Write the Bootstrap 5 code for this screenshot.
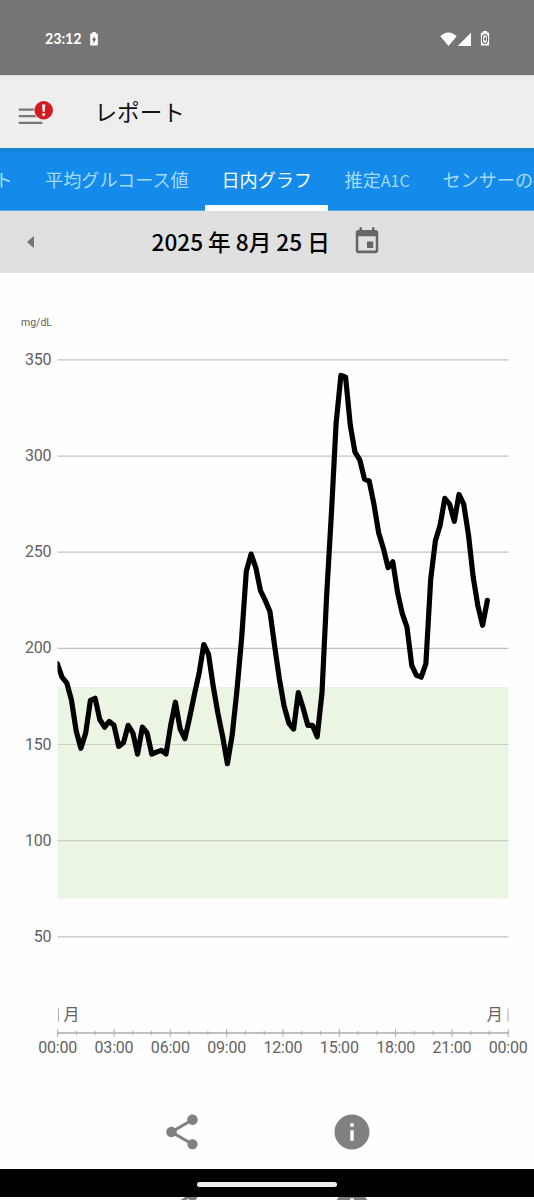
<!DOCTYPE html>
<html lang="ja">
<head>
<meta charset="utf-8">
<meta name="viewport" content="width=device-width, initial-scale=1">
<title>レポート</title>
<link rel="stylesheet" href="https://cdn.jsdelivr.net/npm/bootstrap@5.3.0/dist/css/bootstrap.min.css">
<style>
body{font-family:Roboto,"Noto Sans CJK JP",sans-serif;background:#fefefe;color:#111}
svg{display:block;flex:none}
.screen{height:1200px}
.status-bar{height:75px;background:#757575;color:#fff;padding:2px 44px 0 45px}
.clock{font:700 14.2px/20px Lato,sans-serif;width:37px}
.app-head{height:73px;background:#eee;border-top:1px solid #ddd;padding-left:18px}
.app-title{font:400 22.6px/32px "Noto Sans CJK JP",sans-serif;margin-left:39.5px}
.tab-strip{height:62.5px;background:linear-gradient(#1a7ecb,#148bea 5px);font:400 18.1px/27px "Noto Sans CJK JP",sans-serif;box-shadow:inset 0 -1px #58aaf0}
.tab-strip .nav-link{color:#a5daff;padding:18px 16.3px 11.5px;border-bottom:6px solid transparent;border-radius:0;white-space:nowrap;flex:none}
.tab-strip .nav-link.active{color:#fff;border-color:#fff;padding-left:16.6px}
.tab-strip .cut{width:28.8px;padding-left:0;direction:rtl}
.tab-strip .latin{font-size:16.2px}
.date-bar{height:62.5px;background:#e0e0e0;padding-left:26px}
.date-text{font:500 22.6px/32px "Noto Sans CJK JP",sans-serif;color:#000;margin-left:116.5px;width:200.5px;white-space:nowrap}
.actions{height:73px;padding-left:161px;padding-bottom:2px}
.home-bar{height:27.5px;background:#000}
.home-pill{width:140px;height:5px;background:#eee}
.below{height:3.5px;padding-left:161px}
.chart text{font-family:Roboto,"Noto Sans CJK JP",sans-serif;font-size:16px;letter-spacing:-.2px;fill:#626262}
</style>
</head>
<body>
<svg width="0" height="0" class="position-absolute" aria-hidden="true">
<symbol id="share" viewBox="0 0 24 24"><path fill="#808080" d="M18 16.08c-.76 0-1.44.3-1.96.77L8.91 12.7c.05-.23.09-.46.09-.7s-.04-.47-.09-.7l7.05-4.11c.54.5 1.25.81 2.04.81 1.66 0 3-1.34 3-3s-1.34-3-3-3-3 1.34-3 3c0 .24.04.47.09.7L8.04 9.81C7.5 9.31 6.79 9 6 9c-1.66 0-3 1.34-3 3s1.34 3 3 3c.79 0 1.5-.31 2.04-.81l7.12 4.16c-.05.21-.08.43-.08.65 0 1.61 1.31 2.92 2.92 2.92s2.92-1.31 2.92-2.92-1.31-2.92-2.92-2.92z"/></symbol>
<symbol id="info" viewBox="0 0 24 24"><path fill="#808080" d="M12 2C6.48 2 2 6.48 2 12s4.48 10 10 10 10-4.48 10-10S17.52 2 12 2zm1 15h-2v-6h2v6zm0-8h-2V7h2v2z"/></symbol>
</svg>
<div class="screen d-flex flex-column overflow-hidden">
<header class="status-bar d-flex align-items-center">
 <span class="clock">23:12</span>
 <svg class="ms-2" width="8" height="14" viewBox="0 0 8 14"><path fill="#fff" d="M2.4 0h3.2v1.5H7q.8 0 .8.8v10.4q0 .9-.8.9H1q-.8 0-.8-.9V2.3q0-.8.8-.8h1.4z"/><path fill="#666" d="M4.6 3.8v3h1.6L3.5 11.5V8.3H1.9z"/></svg>
 <div class="d-flex align-items-center ms-auto">
 <svg width="17" height="14" viewBox="0 0 17 14"><path fill="#fff" d="M8.5 14 .3 4.2Q4 .4 8.5.4t8.2 3.8z"/></svg>
 <svg width="15" height="14" viewBox="0 0 15 14"><path fill="#fff" d="M14 .7V14H.7z"/></svg>
 <svg class="ms-2" width="10" height="15" viewBox="0 0 10 15"><path fill="#fff" d="M3 0h4v1.4h1.2q.9 0 .9.9v11.4q0 .9-.9.9H1.8q-.9 0-.9-.9V2.3q0-.9.9-.9H3z"/><ellipse cx="5" cy="8" rx="2.6" ry="4.5" fill="none" stroke="#606060" stroke-width="1.1"/><path fill="#606060" d="m5.6 5-2.2 3.6h1.3V11l2-3.5H5.6z"/></svg>
 </div>
</header>
<div class="app-head d-flex align-items-center">
 <svg width="37" height="30" viewBox="0 0 37 30"><path stroke="#777" stroke-width="2.2" d="M.8 12.6h24M.8 19.2h24M.8 25.8h23.6"/><circle cx="25.7" cy="13.3" r="10" fill="#eee"/><circle cx="25.7" cy="13.3" r="9.2" fill="#d71920"/><path fill="#fff" d="M24.1 7.5h3.2l-.6 7.3h-2z"/><circle cx="25.7" cy="17.6" r="1.5" fill="#fff"/></svg>
 <h1 class="app-title mb-0">レポート</h1>
</div>
<nav class="tab-strip nav flex-nowrap overflow-hidden">
 <a class="nav-link cut">ト</a><a class="nav-link">平均グルコース値</a><a class="nav-link active">日内グラフ</a><a class="nav-link">推定<span class="latin">A1C</span></a><a class="nav-link">センサーの</a>
</nav>
<div class="date-bar d-flex align-items-center">
 <svg width="9" height="14" viewBox="0 0 9 14"><path fill="#777" d="M8 .7v12.6L1 7z"/></svg>
 <div class="date-text">2025 年 8月 25 日</div>
 <svg width="30" height="31" viewBox="0 0 24 24" preserveAspectRatio="none"><path fill="#666" d="M17 12h-5v5h5v-5zM16 1v2H8V1H6v2H5c-1.11 0-1.99.9-1.99 2L3 19c0 1.1.89 2 2 2h14c1.1 0 2-.9 2-2V5c0-1.1-.9-2-2-2h-1V1h-2zm3 18H5V8h14v11z"/></svg>
</div>
<main>
 <svg class="chart" id="chart" width="534" height="823" viewBox="0 273 534 823">
 <defs><clipPath id="plot"><rect x="57.5" y="340" width="451" height="600"/></clipPath></defs>
 </svg>
</main>
<div class="actions d-flex align-items-center">
 <svg width="42" height="42"><use href="#share"/></svg>
 <svg style="margin-left:128px" width="42" height="42"><use href="#info"/></svg>
</div>
<div class="home-bar d-flex justify-content-center align-items-center"><div class="home-pill rounded-pill mt-1"></div></div>
<div class="below d-flex">
 <svg width="42" height="4" viewBox="0 0 42 4"><path stroke="#808080" stroke-width="3" d="m19 5 10-6"/><circle cx="31.5" cy="-1.5" r="5.2" fill="#808080"/></svg>
 <svg style="margin-left:128px" width="42" height="4" viewBox="0 0 42 4"><circle cx="21" cy="16" r="17.5" fill="#808080" transform="translate(0 -4.5)"/><path stroke="#fefefe" stroke-width="4" d="M21 1.5v3"/></svg>
</div>
</div>
<script>
const values=[192,185,182,173,157,148,156,173,174,163,159,162,160,149,151,160,156,145,159,156,145,146,147,145,160,172,158,153,164,176,187,202,197,180,166,154,140,155,178,205,240,249,242,230,225,219,201,184,170,161,158,177,169,160,160,154,177,228,270,317,342,341,316,302,298,288,287,275,260,252,242,245,229,218,211,191,186,185,192,236,256,264,278,275,266,280,275,259,237,222,212,225];
const y=v=>744.5-(v-150)*1.923, left=57.7, right=508.2;
let s=`<rect x="57.5" y="687" width="451" height="211.5" fill="#ebf5e4"/><text x="21" y="326" style="font-size:10.5px;letter-spacing:0">mg/dL</text>`;
for(let v=50;v<=350;v+=50){
 s+=`<path d="M57.5 ${y(v).toFixed(1)}H508.5" stroke="${v==100||v==150?'#c8d0c3':'#c2c2c2'}" stroke-width="1.2"/><text x="51.3" y="${(y(v)+5).toFixed(1)}" text-anchor="end">${v}</text>`;
}
s+=`<polyline clip-path="url(#plot)" fill="none" stroke="#000" stroke-width="5.2" stroke-linecap="round" stroke-linejoin="round" points="${values.map((v,i)=>(57.3+4.726*i).toFixed(1)+','+y(v).toFixed(1)).join(' ')}"/>`;
s+=`<path d="M58.5 1008.5v13M508 1008.5v13" stroke="#aaa"/><text x="63.5" y="1020">月</text><text x="502.5" y="1020" text-anchor="end">月</text><path d="M57 1033H508.7" stroke="#aaa" stroke-width="1.5"/>`;
for(let h=0;h<=24;h++){
 const x=(left+(right-left)*h/24).toFixed(1), major=h%3==0;
 s+=`<path d="M${x} ${major?1029:1031}V${major?1037:1035}" stroke="#aaa"/>`;
 if(major)s+=`<text x="${x}" y="1052.7" text-anchor="middle">${String(h%24).padStart(2,'0')}:00</text>`;
}
document.getElementById('chart').insertAdjacentHTML('beforeend',s);
</script>
<script src="https://cdn.jsdelivr.net/npm/bootstrap@5.3.0/dist/js/bootstrap.bundle.min.js"></script>
</body>
</html>
